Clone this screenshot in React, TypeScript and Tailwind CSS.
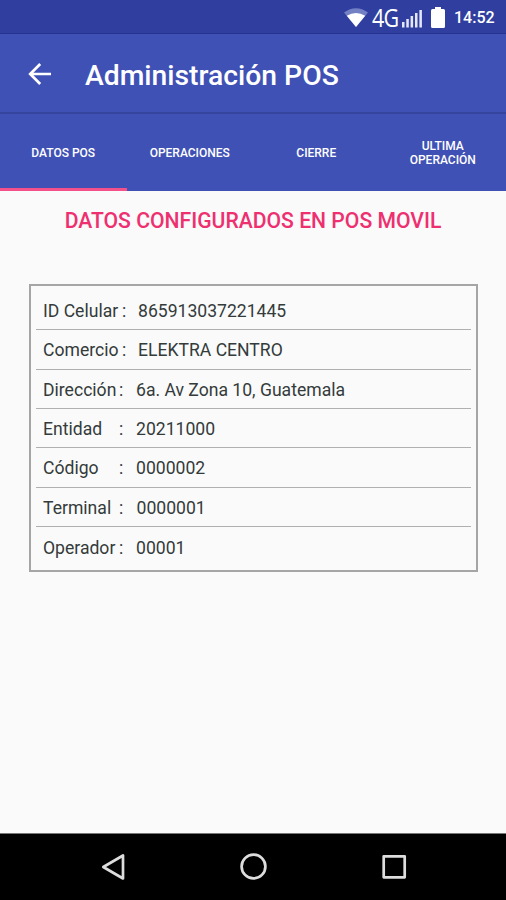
const rows = [
  { label: "ID Celular", colon: "w-[79px]", gap: "w-[16px]", value: "865913037221445" },
  { label: "Comercio", colon: "w-[79px]", gap: "w-[16px]", value: "ELEKTRA CENTRO" },
  { label: "Dirección", colon: "w-[76px]", gap: "w-[17px]", value: "6a. Av Zona 10, Guatemala" },
  { label: "Entidad", colon: "w-[76px]", gap: "w-[17px]", value: "20211000" },
  { label: "Código", colon: "w-[76px]", gap: "w-[17px]", value: "0000002" },
  { label: "Terminal", colon: "w-[76px]", gap: "w-[17.500px]", value: "0000001" },
  { label: "Operador", colon: "w-[76px]", gap: "w-[17px]", value: "00001" },
];

const tabs = ["DATOS POS", "OPERACIONES", "CIERRE", "ULTIMA OPERACIÓN"];

function StatusBar() {
  return (
    <div className="flex h-[34px] shrink-0 items-start justify-end border-b border-[#27348f] bg-[#303f9f] text-white">
      <svg className="mt-[8px] h-[20px] w-[24px]" viewBox="0 0 24 20">
        <path d="M0 4.500Q12-4 24 4.500L12 19Z" fill="#7480c4" />
        <path d="M2.800 7.800Q12 2 21.200 7.800L12 19Z" fill="#fff" />
      </svg>
      <span className="ml-[4px] mt-[4px] w-[28px] origin-left scale-x-[0.86] whitespace-nowrap font-['Open_Sans',sans-serif] text-[25px] font-medium leading-[26px] tracking-[-1px]">
        4G
      </span>
      <svg className="ml-[2px] mt-[10px] h-[18px] w-[20px]" viewBox="0 0 20 18" fill="#e4e7fa">
        <path d="M0 12h2.500v5.500H0zM4.300 9h2.500v8.500H4.300zM8.600 6h2.500v11.500H8.600zM13 3h2.500v14.500H13zM17.400 0h2.500v17.500h-2.500z" />
      </svg>
      <svg className="ml-[9px] mt-[7px] h-[21px] w-[14px]" viewBox="0 0 14 21" fill="#fff">
        <path d="M4 0h6v2h2.500Q14 2 14 3.500v16q0 1.500-1.500 1.500h-11Q0 21 0 19.500v-16Q0 2 1.500 2H4z" />
      </svg>
      <span className="ml-[9px] mr-[11px] mt-[8px] w-[41px] whitespace-nowrap font-medium text-[16px] leading-[20px]">14:52</span>
    </div>
  );
}

function Header() {
  return (
    <header className="flex h-[80px] shrink-0 items-center border-b-2 border-[#35449d] bg-[#3f51b5] text-white">
      <svg className="ml-[28px] mt-[2px] h-[24px] w-[24px]" viewBox="0 0 24 24" fill="none" stroke="#fff" strokeWidth="2.700">
        <path d="M23 12H2.500M12.200 2L2.200 12l10 10" />
      </svg>
      <h1 className="ml-[33px] mt-[6px] whitespace-nowrap font-medium text-[28.300px] leading-[36px]">Administración POS</h1>
    </header>
  );
}

export default function App() {
  return (
    <div className="flex h-[900px] w-[506px] flex-col overflow-hidden bg-[#fafafa] font-[Roboto,sans-serif]">
      <StatusBar />
      <Header />
      <nav className="grid h-[77px] shrink-0 grid-cols-4 bg-[#3f51b5]">
        {tabs.map((tab, i) => (
          <div
            key={tab}
            className={`flex items-center justify-center border-b-[3px] px-4 pt-[4px] text-center font-medium text-[12px] leading-[14px] text-white ${
              i === 0 ? "border-[#f4508a]" : "border-transparent"
            }`}
          >
            {tab}
          </div>
        ))}
      </nav>
      <main className="grow">
        <h2 className="mt-[16px] whitespace-nowrap text-center font-medium text-[21.150px] leading-[28px] text-[#ee2f70]">
          DATOS CONFIGURADOS EN POS MOVIL
        </h2>
        <section className="ml-[29px] mt-[49px] h-[288px] w-[449px] border-[2.500px] border-[#a5a5a5] px-[5px] pt-[5px] text-[17.580px] text-[#343b3b]">
          {rows.map((row, i) => (
            <div
              key={row.label}
              className={`flex h-[39.350px] items-center whitespace-nowrap pl-[7px] pt-[2px] ${
                i < rows.length - 1 ? "border-b-[1.500px] border-[#b0b0b0]" : ""
              }`}
            >
              <span className={row.colon}>{row.label}</span>
              <span className={row.gap}>:</span>
              <span>{row.value}</span>
            </div>
          ))}
        </section>
      </main>
      <footer className="flex h-[67px] shrink-0 border-t border-[#777] bg-black">
        <svg className="ml-[100px] mt-[19px] h-[28px] w-[26px]" viewBox="0 0 26 28" fill="none" stroke="#ddd" strokeWidth="2.700" strokeLinejoin="round">
          <path d="M23 2.500v23L3.300 14z" />
        </svg>
        <svg className="ml-[113px] mt-[18px] h-[30px] w-[30px]" viewBox="0 0 30 30" fill="none" stroke="#ddd" strokeWidth="2.700">
          <circle cx="14.500" cy="14.500" r="11.900" />
        </svg>
        <svg className="ml-[111px] mt-[18px] h-[30px] w-[30px]" viewBox="0 0 30 30" fill="none" stroke="#ddd" strokeWidth="2.700" strokeLinejoin="round">
          <path d="M3.700 4.300h21v21h-21z" />
        </svg>
      </footer>
    </div>
  );
}
